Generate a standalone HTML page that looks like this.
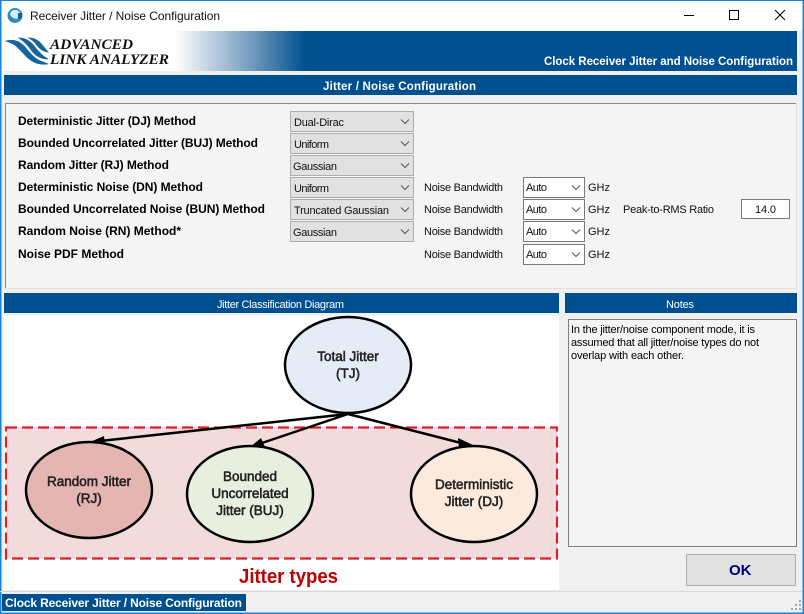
<!DOCTYPE html>
<html><head><meta charset="utf-8"><title>Receiver Jitter / Noise Configuration</title>
<style>
html,body{margin:0;padding:0;width:804px;height:614px;overflow:hidden;background:#f0f0f0}
svg{display:block;position:absolute;left:0;top:0}
text{font-family:"Liberation Sans",sans-serif;font-size:11px;fill:#111}
.b{font-weight:bold;font-size:12px;fill:#000}
.h{font-weight:bold;font-size:11.5px;fill:#fff}
.w{fill:#fff}
.d{font-size:13.5px;fill:#222;stroke:#222;stroke-width:.55;text-anchor:middle}
.l{font-family:"Liberation Serif",serif;font-style:italic;font-weight:bold;font-size:15px;fill:#111}
.c{fill:none;stroke:#555;stroke-width:1}
</style></head><body>
<svg width="804" height="614" viewBox="0 0 804 614" xmlns="http://www.w3.org/2000/svg">
<defs><linearGradient id="g" x1="0" x2="1" y1="0" y2="0"><stop offset="0" stop-color="#fff"/><stop offset=".25" stop-color="#c4d5e4"/><stop offset=".6" stop-color="#7099bd"/><stop offset="1" stop-color="#00508f"/></linearGradient>
<filter id="s" x="-5%" y="-5%" width="110%" height="110%"><feGaussianBlur stdDeviation=".3"/></filter></defs>
<rect width="804" height="614" fill="#f0f0f0"/>
<rect width="804" height="31" fill="#fff"/>
<rect x="0" y="0" width="804" height="1" fill="#1a85d6"/>
<rect x="0" y="0" width="1.500" height="614" fill="#1a85d6"/>
<rect x="802.500" y="0" width="1.500" height="614" fill="#1a85d6"/>
<rect x="0" y="612.500" width="804" height="1.500" fill="#1a85d6"/>
<!-- title -->
<circle cx="15" cy="15.500" r="7.500" fill="#2f8ac4"/>
<path d="M10 14c1-4 5-5 8-3.500l3 3c-1-1-3 0-3 1v4c-3 1-7-1-8-4.500z" fill="#dcecf6"/>
<path d="M18 13h4v4l-3 2h-1z" fill="#0f5f9e"/>
<text x="30" y="20" textLength="190" style="font-size:12px">Receiver Jitter / Noise Configuration</text>
<path d="M684 15.500h10" stroke="#000" stroke-width="1"/>
<rect x="729.500" y="10.500" width="9" height="9" fill="none" stroke="#000"/>
<path d="M775 10l10 10M785 10l-10 10" stroke="#000" stroke-width="1"/>
<!-- banner -->
<rect x="2" y="31" width="795" height="40" fill="#00508f"/>
<rect x="2" y="31" width="174" height="40" fill="#fff"/>
<rect x="175" y="31" width="130" height="40" fill="url(#g)"/>
<g fill="#15659c" stroke="#15659c" stroke-width=".8" transform="translate(1 0)">
<path d="M5 41c7-2 13 0 18 5 5 6 9 11 14 14l10 4c-8 1-15-1-21-7-5-5-8-9-12-12-3-2-6-3-9-4z"/>
<path d="M18 38c6 0 11 3 15 8 4 5 8 10 14 13-7 0-12-3-16-8-4-6-8-10-13-13z"/>
<path d="M28 38c6 0 10 3 14 8l5 6c-6-1-9-4-12-8-2-3-4-4-7-6z"/>
</g>
<text class="l" x="50" y="49" textLength="83" lengthAdjust="spacingAndGlyphs">ADVANCED</text>
<text class="l" x="50" y="64" textLength="119" lengthAdjust="spacingAndGlyphs">LINK ANALYZER</text>
<text class="h" x="544" y="65" textLength="249">Clock Receiver Jitter and Noise Configuration</text>
<!-- config bar -->
<rect x="4" y="75" width="793" height="20" fill="#00508f"/>
<text class="h" x="323" y="90" textLength="153">Jitter / Noise Configuration</text>
<!-- panel -->
<rect x="5.500" y="103.500" width="791" height="185" fill="#f4f4f4" stroke="#e0e0e0"/>
<path d="M5.500 288V103.500H796" fill="none" stroke="#8a8a8a"/>
<text class="b" x="18" y="125" textLength="178">Deterministic Jitter (DJ) Method</text>
<text class="b" x="18" y="147" textLength="240">Bounded Uncorrelated Jitter (BUJ) Method</text>
<text class="b" x="18" y="169" textLength="151">Random Jitter (RJ) Method</text>
<text class="b" x="18" y="191" textLength="185">Deterministic Noise (DN) Method</text>
<text class="b" x="18" y="213" textLength="247">Bounded Uncorrelated Noise (BUN) Method</text>
<text class="b" x="18" y="235" textLength="163">Random Noise (RN) Method*</text>
<text class="b" x="18" y="258" textLength="106">Noise PDF Method</text>
<!-- gray selects -->
<g fill="#e1e1e1" stroke="#adadad">
<rect x="290.500" y="111.500" width="123" height="20"/>
<rect x="290.500" y="133.500" width="123" height="20"/>
<rect x="290.500" y="155.500" width="123" height="20"/>
<rect x="290.500" y="177.500" width="123" height="20"/>
<rect x="290.500" y="199.500" width="123" height="20"/>
<rect x="290.500" y="221.500" width="123" height="20"/>
</g>
<text x="294" y="126" textLength="50">Dual-Dirac</text>
<text x="294" y="148" textLength="35">Uniform</text>
<text x="293" y="170" textLength="44">Gaussian</text>
<text x="294" y="192" textLength="35">Uniform</text>
<text x="294" y="214" textLength="95">Truncated Gaussian</text>
<text x="293" y="236" textLength="44">Gaussian</text>
<path class="c" d="M401 119.500l4 4 4-4M401 141.500l4 4 4-4M401 163.500l4 4 4-4M401 185.500l4 4 4-4M401 207.500l4 4 4-4M401 229.500l4 4 4-4"/>
<!-- noise rows -->
<text x="424" y="191" textLength="79">Noise Bandwidth</text>
<text x="424" y="213" textLength="79">Noise Bandwidth</text>
<text x="424" y="235" textLength="79">Noise Bandwidth</text>
<text x="424" y="258" textLength="79">Noise Bandwidth</text>
<g fill="#fff" stroke="#7a7a7a">
<rect x="523.500" y="177.500" width="61" height="20"/>
<rect x="523.500" y="199.500" width="61" height="20"/>
<rect x="523.500" y="221.500" width="61" height="20"/>
<rect x="523.500" y="244.500" width="61" height="20"/>
<rect x="741.500" y="199.500" width="48" height="19"/>
</g>
<text x="526" y="191" textLength="21">Auto</text>
<text x="526" y="213" textLength="21">Auto</text>
<text x="526" y="235" textLength="21">Auto</text>
<text x="526" y="258" textLength="21">Auto</text>
<path class="c" d="M572 185.500l4 4 4-4M572 207.500l4 4 4-4M572 229.500l4 4 4-4M572 252.500l4 4 4-4"/>
<text x="588" y="191" textLength="22">GHz</text>
<text x="588" y="213" textLength="22">GHz</text>
<text x="588" y="235" textLength="22">GHz</text>
<text x="588" y="258" textLength="22">GHz</text>
<text x="623" y="213" textLength="91">Peak-to-RMS Ratio</text>
<text x="755" y="213" textLength="21">14.0</text>
<!-- section headers -->
<rect x="4" y="293" width="555" height="20" fill="#00508f"/>
<rect x="565" y="293" width="232" height="20" fill="#00508f"/>
<text class="w" x="217" y="308" textLength="127">Jitter Classification Diagram</text>
<text class="w" x="666" y="308" textLength="28">Notes</text>
<!-- diagram -->
<rect x="4" y="316" width="555" height="274" fill="#fff"/>
<g filter="url(#s)">
<rect x="6" y="427.500" width="551" height="131" fill="#f2dcdb" stroke="#d5202f" stroke-width="2.200" stroke-dasharray="11 5"/>
<g stroke="#000" stroke-width="2.500" fill="none">
<path d="M348 414L100 441M348 414L262 443M348 414L465 444"/>
</g>
<path d="M90 442l14-6 1 10z" fill="#000"/>
<path d="M250 447l11-9 4 9z" fill="#000"/>
<path d="M473 445l-14 3-1-10z" fill="#000"/>
<g stroke="#000" stroke-width="2.500">
<ellipse cx="348" cy="365" rx="63" ry="48" fill="#e6ecf7"/>
<ellipse cx="89" cy="490" rx="63" ry="48" fill="#e4b5b1"/>
<ellipse cx="250" cy="494" rx="63" ry="48" fill="#e9efdf"/>
<ellipse cx="474" cy="494" rx="63" ry="48" fill="#fceadd"/>
</g>
<text class="d" x="348" y="361">Total Jitter</text>
<text class="d" x="348" y="378">(TJ)</text>
<text class="d" x="89" y="486">Random Jitter</text>
<text class="d" x="89" y="503">(RJ)</text>
<text class="d" x="250" y="481">Bounded</text>
<text class="d" x="250" y="498">Uncorrelated</text>
<text class="d" x="250" y="515">Jitter (BUJ)</text>
<text class="d" x="474" y="489">Deterministic</text>
<text class="d" x="474" y="506">Jitter (DJ)</text>
<text x="239" y="583" textLength="99" lengthAdjust="spacingAndGlyphs" style="font-size:20px;font-weight:bold;fill:#c00000">Jitter types</text>
</g>
<!-- notes -->
<rect x="568.500" y="319.500" width="228" height="227" fill="#f4f4f4" stroke="#7f7f7f"/>
<text x="571" y="333" textLength="184" style="fill:#000">In the jitter/noise component mode, it is</text>
<text x="571" y="346" textLength="188" style="fill:#000">assumed that all jitter/noise types do not</text>
<text x="571" y="359" textLength="113" style="fill:#000">overlap with each other.</text>
<!-- OK -->
<rect x="686.500" y="554.500" width="109" height="31" fill="#e1e1e1" stroke="#adadad"/>
<text x="729" y="575" style="font-size:15px;font-weight:bold;fill:#000080">OK</text>
<!-- status -->
<rect x="0" y="591" width="802" height="1" fill="#d8d8d8"/>
<rect x="2" y="594" width="244" height="17" fill="#00508f"/>
<text class="h" x="5" y="607" textLength="237" style="font-size:12px">Clock Receiver Jitter / Noise Configuration</text>
<g fill="#a8a8a8"><rect x="799" y="600" width="2" height="2"/><rect x="795" y="604" width="2" height="2"/><rect x="799" y="604" width="2" height="2"/><rect x="791" y="608" width="2" height="2"/><rect x="795" y="608" width="2" height="2"/><rect x="799" y="608" width="2" height="2"/></g>
</svg>
</body></html>
